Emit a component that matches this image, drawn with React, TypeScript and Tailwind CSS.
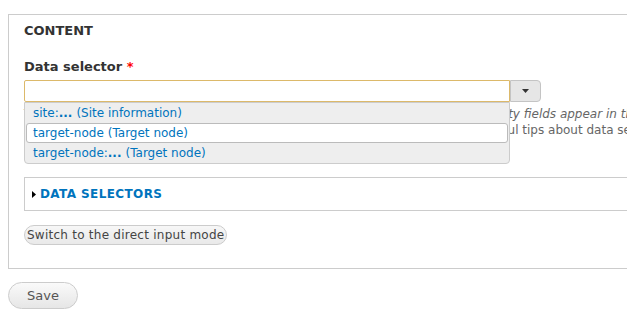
import React from "react";

const suggestions = [
  { name: "site:", more: true, label: "(Site information)" },
  { name: "target-node", more: false, label: "(Target node)" },
  { name: "target-node:", more: true, label: "(Target node)" },
];

export default function App() {
  return (
    <div className="w-[627px] h-[320px] overflow-hidden bg-white font-['DejaVu_Sans',sans-serif] text-[12px] text-[#333]">
      <div className="pt-[14px] pl-[8px]">
        {/* content fieldset */}
        <div className="w-[680px] h-[255px] border border-[#ccc] pl-[15px] pt-[7px]">
          <h2 className="text-[13px] leading-[18px] font-bold uppercase text-[#333]">
            Content
          </h2>

          <label className="mt-[18px] block text-[13px] leading-[18px] font-bold text-[#333]">
            Data selector <span className="text-[#f00]">*</span>
          </label>

          <div className="relative mt-[4px]">
            <div className="flex">
              <input
                className="w-[486px] h-[22px] border border-[#dcb96a] rounded-l-[2px] bg-white outline-none"
                type="text"
              />
              <button className="w-[31px] h-[22px] flex items-center justify-center border border-[#c4c4c4] rounded-r-[4px] bg-[#e6e6e6]">
                <svg width="7" height="4" viewBox="0 0 7 4">
                  <path d="M0 0h7L3.5 4z" fill="#333" />
                </svg>
              </button>
            </div>

            {/* description, partly hidden by the autocomplete list */}
            <div className="mt-[4px] text-[12px] leading-[16px] text-[#666] whitespace-nowrap">
              <div>
                The data selector helps you drill down into the available data.{" "}
                <em>To make your entity fields appear in the data selector, you may</em>
              </div>
              <div>
                <em>have to use the condition 'entity has a field' (or 'content is of a type').</em>{" "}
                More useful tips about data selection is available in the documentation.
              </div>
              <div>See the online handbook.</div>
            </div>

            {/* autocomplete list */}
            <ul className="absolute left-0 top-[22px] w-[486px] border border-[#ccc] rounded-b-[4px] bg-[#eee] text-[#0074bd]">
              {suggestions.map((s, i) => (
                <li
                  key={i}
                  className={
                    i === 1
                      ? "h-[20px] mx-[1px] pl-[6px] flex items-center bg-white border border-[#bbb] rounded-[3px]"
                      : "h-[20px] pl-[8px] flex items-center"
                  }
                >
                  {s.name}
                  {s.more && <b>...</b>}
                  <span className="ml-[4px]">{s.label}</span>
                </li>
              ))}
            </ul>
          </div>

          {/* collapsed fieldset */}
          <div className="mt-[23px] h-[34px] border border-[#ccc] flex items-center pl-[7px]">
            <svg width="4" height="7" viewBox="0 0 4 7" className="mr-[4px]">
              <path d="M0 0l4 3.5L0 7z" fill="#000" />
            </svg>
            <a href="#" className="text-[12px] font-bold uppercase tracking-[0.4px] text-[#0074bd]">
              Data selectors
            </a>
          </div>

          <button className="mt-[14px] h-[20px] px-[2px] border border-[#ccc] rounded-full bg-gradient-to-b from-[#f7f7f7] to-[#e9e9e9] text-[12px] leading-[18px] tracking-[0.25px] text-[#444]">
            Switch to the direct input mode
          </button>
        </div>

        <button className="mt-[13px] w-[70px] h-[27px] border border-[#ccc] rounded-full bg-gradient-to-b from-[#fafafa] to-[#e6e6e6] text-[13px] text-[#555]">
          Save
        </button>
      </div>
    </div>
  );
}
